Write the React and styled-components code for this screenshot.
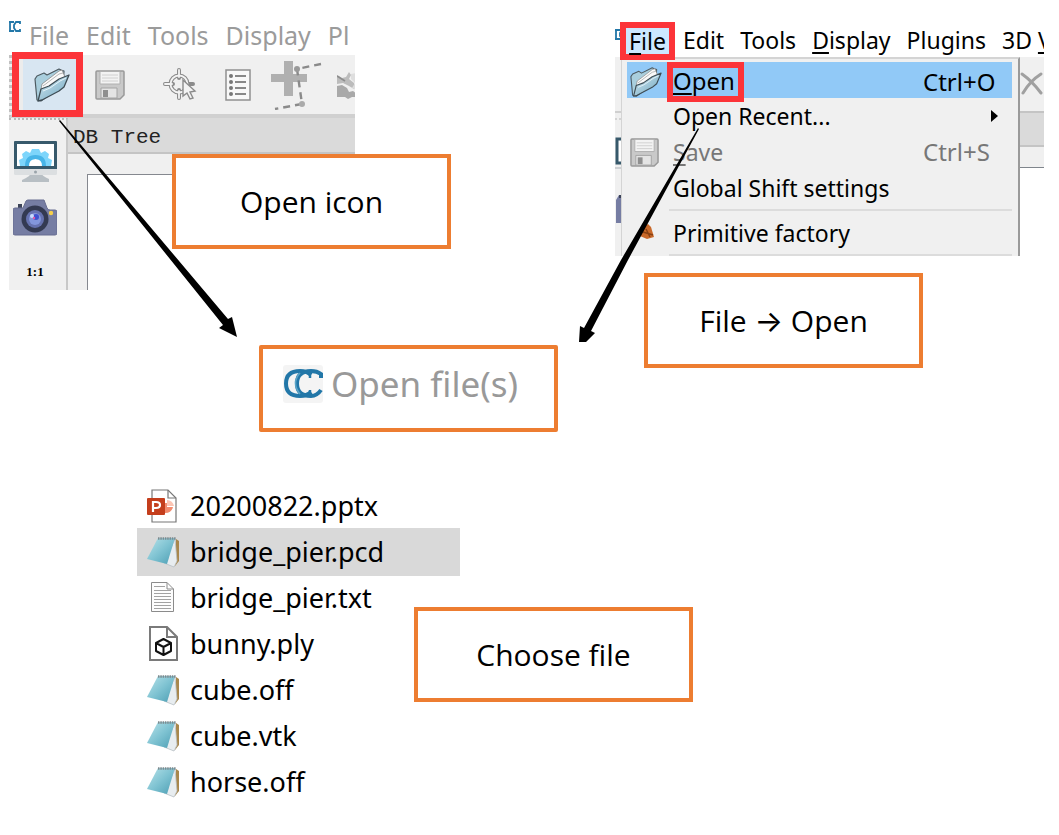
import React from "react";
import styled, { createGlobalStyle, css } from "styled-components";

const Global = createGlobalStyle`
  *, *::before, *::after { box-sizing: border-box; }
  body { margin: 0; background: #fff; color: #000; font-family: "Noto Sans", "Open Sans", sans-serif; }
  button { font: inherit; color: inherit; border: 0; background: none; padding: 0; margin: 0; }
  ul { list-style: none; margin: 0; padding: 0; }
  svg { display: block; flex: none; }
  u { text-underline-offset: 3px; text-decoration-thickness: 2px; }
`;

const Page = styled.main`
  display: flex;
  flex-direction: column;
  gap: 51px;
  padding: 17px 15px 28px 9px;
`;

const Steps = styled.div`
  display: grid;
  grid-template-columns: 1fr auto;
  column-gap: 56px;
`;

const Step = styled.section`
  position: relative;
  display: flex;
  flex-direction: column;
  align-items: flex-start;
  gap: ${(p) => p.$gap}px;
`;

const Arrow = styled.svg`
  position: absolute;
  left: ${(p) => p.$x}px;
  top: ${(p) => p.$y}px;
  z-index: 2;
  pointer-events: none;
`;

const Callout = styled.div`
  display: flex;
  align-items: center;
  justify-content: center;
  width: 279px;
  height: 95px;
  padding-top: 1px;
  border: 4px solid #ed7d31;
  background: #fff;
  font-family: "Open Sans", sans-serif;
  font-size: 30px;
  line-height: 40px;
  white-space: pre;
  ${(p) =>
    p.$over &&
    css`
      position: absolute;
      z-index: 1;
      left: ${p.$over[0]}px;
      top: ${p.$over[1]}px;
    `}
`;

const ArrowGlyph = styled.span`
  font-family: "Inter", sans-serif;
`;

const RightCallout = styled.div`
  padding-left: 29px;
`;

/* Main window with toolbar */

const Shot = styled.div`
  width: 346px;
  height: 273px;
  display: flex;
  flex-direction: column;
  overflow: hidden;
`;

const MenuBar = styled.nav`
  display: flex;
  height: 38px;
  gap: 17px;
  color: #9b9b9b;
  white-space: nowrap;
  font-size: 25px;
  line-height: 36px;
`;

const WindowLogo = styled.span`
  width: 3px;
`;

const MenuBarItem = styled.button`
  flex: none;
  height: 36px;
`;

const Toolbar = styled.div`
  display: flex;
  align-items: center;
  height: 63px;
  background: #f0f0f0;
  border-bottom: 4px solid #d0d0d0;
  border-left: 3px dotted #c0c0c0;
`;

const ToolButton = styled.button`
  display: flex;
  align-items: center;
  justify-content: center;
  flex: none;
  width: ${(p) => p.$w}px;
  height: 56px;
`;

const MarkedTool = styled(ToolButton)`
  height: 65px;
  padding-left: 8px;
  border: 7px solid #fc3439;
  background: #d8e6f2;
  box-shadow: inset 4px 0 #ececec;
  position: relative;
  z-index: 1;
`;

const ToolSeparator = styled.span`
  width: 2px;
  height: 49px;
  margin-left: 8px;
  background: #dcdcdc;
`;

const Body = styled.div`
  display: flex;
  flex: 1;
`;

const SideBar = styled.div`
  width: 59px;
  display: flex;
  flex-direction: column;
  align-items: center;
  padding: 20px 5px 0 0;
  gap: 16px;
  background: #f0f0f0;
  border-top: 2px dotted #b8b8b8;
  border-right: 2px solid #c8c8c8;
`;

const Ratio = styled.button`
  font-family: "Liberation Serif", serif;
  font-weight: 700;
  font-size: 13px;
  line-height: 16px;
  padding-top: 12px;
`;

const Dock = styled.div`
  flex: 1;
  display: flex;
  flex-direction: column;
  background: #f0f0f0;
`;

const DockTitle = styled.div`
  height: 36px;
  padding-left: 5px;
  background: #dadada;
  border-bottom: 2px solid #c4c4c4;
  color: #222;
  font-family: "Liberation Mono", monospace;
  font-size: 21px;
  line-height: 40px;
`;

const TreeView = styled.div`
  flex: 1;
  margin: 20px 0 0 19px;
  background: #fff;
  border: 1px solid #85888f;
  border-width: 1px 0 0 1px;
`;

/* Dialog title */

const DialogTitle = styled.div`
  display: flex;
  align-items: center;
  gap: 8px;
  width: 299px;
  height: 87px;
  margin-left: 250px;
  padding: 0 0 10px 20px;
  border: 4px solid #ed7d31;
  border-radius: 2px;
  color: #999;
  font-size: 35px;
  line-height: 44px;
  white-space: nowrap;
`;

/* Window with the open File menu */

const MenuShot = styled.div`
  width: 429px;
  height: 234px;
  overflow: hidden;
  margin-top: 5px;
`;

const TopMenu = styled(MenuBar)`
  height: 35px;
  gap: 16px;
  color: #000;
  font-size: 23px;
`;

const CutLogo = styled.span`
  flex: none;
  width: 5px;
  margin-right: -16px;
  padding-top: 3px;
  overflow: hidden;
`;

const MarkedItem = styled(MenuBarItem)`
  width: 55px;
  height: 38px;
  margin-right: -8px;
  line-height: 24px;
  border: 6px solid #fc3439;
  background: #cce8ff;
  position: relative;
  z-index: 2;
`;

const Backdrop = styled.div`
  height: 199px;
  display: grid;
  grid-template-columns: 6px 1fr 24px;
`;

const Strip = styled.div`
  display: flex;
  flex-direction: column;
  overflow: hidden;
  background: #f0f0f0;
  padding-top: ${(p) => p.$pad}px;
`;

const StripTitle = styled.div`
  height: 36px;
  margin-top: 14px;
  background: #dadada;
  border: 2px solid #c4c4c4;
  border-width: 2px 0;
`;

const StripView = styled.div`
  flex: 1;
  margin-top: 20px;
  border-top: 1px solid #7f858c;
  background: #fff;
`;

const Menu = styled.ul`
  background: #f0f0f0;
  border: 2px solid #d4d4d4;
  border-width: 2px 2px 0 1px;
  border-right-color: #9a9a9a;
  padding: 3px 6px 0 5px;
`;

const MenuAction = styled.button`
  display: grid;
  grid-template-columns: 46px 1fr auto;
  align-items: center;
  width: 100%;
  height: 36px;
  padding: 0 14px 0 0;
  text-align: left;
  font-size: 23px;
  line-height: 36px;
  white-space: nowrap;
  color: ${(p) => (p.disabled ? "#777" : "#000")};
  background: ${(p) => (p.$active ? "#91c9f7" : "transparent")};
`;

const MenuIcon = styled.span`
  display: flex;
  padding-left: 3px;
`;

const Shortcut = styled.span`
  width: 75px;
  font-size: 24px;
`;

const Divider = styled.li`
  height: 2px;
  margin: 3px 0 4px 42px;
  background: #dcdcdc;
`;

const Marked = styled.span`
  display: block;
  width: 77px;
  height: 40px;
  margin-left: -6px;
  border: 6px solid #fc3439;
  font-size: 24px;
  line-height: 26px;
`;

/* File list */

const Files = styled.section`
  position: relative;
  width: 321px;
  margin-left: 129px;
`;

const FileItem = styled.li`
  display: flex;
  align-items: center;
  gap: 10px;
  height: 46px;
  padding-left: 8px;
  font-size: 27px;
  line-height: 46px;
  white-space: nowrap;
  background: ${(p) => (p.$selected ? "#d9d9d9" : "transparent")};
  box-shadow: ${(p) => (p.$selected ? "0 0 0 1px #d9d9d9" : "none")};
`;

const FolderIcon = ({ w = 36 }) => (
  <svg width={w} height={w} viewBox="0 0 36 36">
    <defs>
      <linearGradient id="folder" x1="0" y1="0" x2="1" y2="1">
        <stop offset="0" stopColor="#d3e9f3" />
        <stop offset="1" stopColor="#6fa6bf" />
      </linearGradient>
    </defs>
    <path d="M3 33 L1 12 L3 9 L10 6 L13 8 L25 2 L27 3 L30 4 L29 18 L7 34 Z" fill="#a9cedd" stroke="#4d5a61" strokeWidth="1.2" strokeLinejoin="round" />
    <path d="M6 28 L8 17 L25 4 L28 3 L31 10 L12 27 Z" fill="#fafafa" stroke="#888" strokeWidth="0.8" />
    <path d="M9 19 L25 7 L29 6" stroke="#b5b5b5" fill="none" />
    <path d="M4 34 L7 22 L15 19 L25 12 L35 8 L30 20 L25 24 L8 33 Z" fill="url(#folder)" stroke="#3e4c54" strokeWidth="1.3" strokeLinejoin="round" />
    <path d="M9 24 L16 21 L26 14 L32 11" stroke="#e8f5fa" fill="none" />
  </svg>
);

const FloppyIcon = ({ w = 30 }) => (
  <svg width={w} height={w} viewBox="0 0 30 30">
    <path d="M1 2 Q1 1 2 1 H28 Q29 1 29 2 V25 L25 29 H2 Q1 29 1 28 Z" fill="#c9c9c9" stroke="#999" strokeWidth="1.5" />
    <path d="M5 1.5 H25 V14 H5 Z" fill="#f3f3f3" stroke="#b0b0b0" />
    <path d="M7 5 H23 M7 8 H23 M7 11 H23" stroke="#d0d0d0" />
    <path d="M6 18 H22 V28 H6 Z" fill="#e4e4e4" stroke="#a4a4a4" />
    <path d="M8 20 H13 V27 H8 Z" fill="#8f8f8f" />
  </svg>
);

const TargetIcon = () => (
  <svg width="34" height="34" viewBox="0 0 34 34" fill="none">
    <circle cx="16" cy="16" r="8.5" stroke="#8b8b8b" strokeWidth="4" />
    <path d="M16 2 V10 M16 22 V30 M2 16 H10 M22 16 H30" stroke="#8b8b8b" strokeWidth="4" strokeLinecap="round" />
    <circle cx="16" cy="16" r="8.5" stroke="#f3f3f3" strokeWidth="1.8" />
    <path d="M16 2 V9 M16 23 V30 M2 16 H9" stroke="#f3f3f3" strokeWidth="1.8" strokeLinecap="round" />
    <path d="M20 12 V28 L24 25 L27 31 L30 30 L27 24 L32 23 Z" fill="#f3f3f3" stroke="#8b8b8b" strokeWidth="1.4" />
  </svg>
);

const ListIcon = () => (
  <svg width="26" height="32" viewBox="0 0 26 32">
    <path d="M1 1 H25 V31 H1 Z" fill="#f8f8f8" stroke="#909090" strokeWidth="1.5" />
    {[7, 13, 19, 25].map((y) => (
      <g key={y}>
        <circle cx="6" cy={y} r="2" fill="#777" />
        <path d={`M10 ${y} H21`} stroke="#888" strokeWidth="2" />
      </g>
    ))}
  </svg>
);

const PolylineIcon = () => (
  <svg width="52" height="50" viewBox="0 0 52 50">
    <path d="M1 14 H14 V1 H23 V14 H37 V22 H23 V36 H14 V22 H1 Z" fill="#b0b0b0" />
    <path d="M51 4 L27 9 L32 44 L5 49" fill="none" stroke="#8a8a8a" strokeWidth="2.4" strokeDasharray="7 5" />
    <circle cx="27" cy="9" r="3" fill="#999" />
    <circle cx="32" cy="44" r="3" fill="#aaa" />
  </svg>
);

const SegmentIcon = () => (
  <svg width="20" height="28" viewBox="0 0 20 28">
    <path d="M0 4 L5 7 L9 6 L12 1 L14 4 L12 8 L17 12 V18 L12 15 L6 12 L0 13 Z" fill="#bcbcbc" />
    <path d="M0 15 L5 14 L10 17 L12 21 L16 20 L20 23 V26 H15 L11 28 L8 26 H0 Z" fill="#a9a9a9" />
    <path d="M14 3 L20 2 V19 L15 17 L18 12 L14 8 Z" fill="#dedede" />
    <path d="M0 5 L8 10" stroke="#8d8d8d" strokeWidth="1.6" />
  </svg>
);

const MonitorIcon = () => (
  <svg width="43" height="43" viewBox="0 0 43 43">
    <path d="M12 38 Q16 36 17 33 H27 Q28 36 35 39 V42 H8 V40 Z" fill="#b8bfc4" />
    <rect x="0" y="1" width="43" height="34" rx="1.5" fill="#dcdfe1" />
    <path d="M0 2 Q0 1 1 1 H42 Q43 1 43 2 V29 H0 Z" fill="#37596b" />
    <rect x="3" y="4" width="37" height="22" fill="#fff" />
    <path d="M6 26 L5 20 L9 18 L8 14 L12 11 L16 13 L18 9 H25 L27 13 L31 11 L35 14 L34 18 L38 20 L37 26 H29 Q28 19 21.500 19 Q15 19 14 26 Z" fill="#7dd5fb" />
    <path d="M11 26 Q11 15 21.500 15 Q32 15 32 26 H28 Q28 19 21.500 19 Q15 19 15 26 Z" fill="#48b5e8" />
    <circle cx="21.500" cy="32" r="1.500" fill="#9aa4aa" />
  </svg>
);

const CameraIcon = () => (
  <svg width="44" height="37" viewBox="0 0 44 37">
    <path d="M5 9 V5 H9 V9" fill="#3c4358" />
    <path d="M2 9 H10 L13 2 Q14 1 15 1 H31 L34 9 Q35 11 37 11 H42 Q44 11 44 13 V34 Q44 36 42 36 H2 Q0 36 0 34 V11 Q0 9 2 9 Z" fill="#767da3" stroke="#666c90" />
    <circle cx="22" cy="20" r="13.500" fill="#343a52" />
    <circle cx="22" cy="20" r="9" fill="#6672b0" />
    <circle cx="22" cy="20" r="6" fill="#8396dc" />
    <circle cx="23" cy="18" r="3" fill="#3f52cf" />
    <circle cx="19" cy="17" r="2" fill="#c9dcff" />
    <circle cx="21" cy="19" r="1.200" fill="#e45aa8" />
    <circle cx="38" cy="14" r="2.200" fill="#f6cf4a" />
  </svg>
);

const SideEdge = () => (
  <svg width="6" height="199" viewBox="0 0 6 199">
    <path d="M0 55 H6" stroke="#d0d0d0" strokeWidth="2" />
    <path d="M0 62 H6" stroke="#b8b8b8" strokeDasharray="2 2" />
    <path d="M1 82 H6 V106 H1 Z" fill="#fff" />
    <path d="M6 82 H2 V106 H6" fill="none" stroke="#37596b" strokeWidth="3" />
    <path d="M0 111 H6" stroke="#cdd0d3" strokeWidth="2" />
    <path d="M1 143 L4 138 H6 V166 H1 Z" fill="#767da3" />
    <path d="M4 138 H6 V141 H4 Z" fill="#3c4358" />
  </svg>
);

const CCLogo = () => (
  <svg width="40" height="38" viewBox="0 0 40 38">
    <rect width="40" height="38" rx="3" fill="#f4f4f4" />
    <path d="M28 10 Q24 6 17 6 Q3 6 3 18.500 Q3 31 17 31 Q24 31 28 27" fill="none" stroke="#2277a8" strokeWidth="4" />
    <path d="M38 13 V9 Q34 6 28 6 Q14 6 14 18.500 Q14 31 28 31 Q34 31 38 25" fill="none" stroke="#2277a8" strokeWidth="4" />
    <path d="M27 8 V13 M27 25 V29" stroke="#2277a8" strokeWidth="2.500" />
    <path d="M17 8 Q8 18 17 29" fill="none" stroke="#5aa3c6" strokeWidth="1.600" />
  </svg>
);

const SmallLogo = () => (
  <svg width="12" height="20" viewBox="0 0 12 20">
    <path d="M0 5 H5 M0 14 H5 M1 5 V14 M11 7 V5 H7 L5 8 V11 L7 14 H11 V12" fill="none" stroke="#2277a8" strokeWidth="1.800" />
  </svg>
);

const PptIcon = () => (
  <svg width="34" height="34" viewBox="0 0 34 34">
    <path d="M6 1 H22 L30 9 V33 H6 Z" fill="#fff" stroke="#777" strokeWidth="1.200" />
    <path d="M22 1 V9 H30" fill="none" stroke="#777" strokeWidth="1.200" />
    <path d="M19 14 V24 A8 8 0 0 0 27 18 H21 V14 Z" fill="#f28b6e" />
    <path d="M21 11 A7 7 0 0 1 28 17 H21 Z" fill="#fbc4b3" />
    <rect x="1" y="9" width="18" height="17" rx="1" fill="#c43e1c" />
    <path d="M7 23 V13 H10 Q14 13 14 16 Q14 19 10 19 H7" fill="none" stroke="#fff" strokeWidth="2.200" />
  </svg>
);

const NotepadIcon = () => (
  <svg width="34" height="34" viewBox="0 0 34 34">
    <defs>
      <linearGradient id="pad" x1="0" y1="0" x2="1" y2="1">
        <stop offset="0" stopColor="#b9e3ea" />
        <stop offset="0.500" stopColor="#7fc3d2" />
        <stop offset="1" stopColor="#4b9db3" />
      </linearGradient>
    </defs>
    <path d="M30 4 L33 6 V26 L29 31 Z" fill="#a8874c" />
    <path d="M29 4 L31 26 L28 32 L18 28 Z" fill="#e8edf0" stroke="#b7bfc4" strokeWidth="0.800" />
    <path d="M12 3 H29 L21 29 L1 24 Z" fill="url(#pad)" />
    <path d="M12 3.500 H30" stroke="#7d8a8f" strokeWidth="2.600" strokeDasharray="1.500 0.800" />
  </svg>
);

const TextIcon = () => (
  <svg width="34" height="34" viewBox="0 0 34 34">
    <path d="M5.500 1.500 H21 L27.500 8 V30.500 H5.500 Z" fill="#fdfdfd" stroke="#8b8b8b" />
    <path d="M21 1.500 V8 H27.500" fill="none" stroke="#8b8b8b" />
    <path d="M8 5.500 H19 M8 9.500 H25 M8 12.500 H25 M8 15.500 H25 M8 18.500 H25 M8 21.500 H25 M8 24.500 H25 M8 27.500 H25" stroke="#a2a2a2" />
  </svg>
);

const PlyIcon = () => (
  <svg width="34" height="36" viewBox="0 0 34 36">
    <path d="M4 1 H21 L31 11 V34 H4 Z" fill="#fff" stroke="#7a7a7a" strokeWidth="2" />
    <path d="M21 1 V11 H31" fill="none" stroke="#7a7a7a" strokeWidth="2" />
    <path d="M17.500 13 L25 17 V25 L17.500 29 L10 25 V17 Z M10 17 L17.500 21 L25 17 M17.500 21 V29" fill="none" stroke="#111" strokeWidth="2" strokeLinejoin="round" />
  </svg>
);

const ShapesIcon = () => (
  <svg width="26" height="22" viewBox="0 0 26 22">
    <path d="M14 4 L18 2 L21 5 L24 15 L17 17 L10 14 Z" fill="#c9692a" />
    <path d="M16 7 L20 15 M13 10 L23 13" stroke="#8a4214" strokeWidth="1.500" />
  </svg>
);

const files = [
  ["20200822.pptx", PptIcon],
  ["bridge_pier.pcd", NotepadIcon],
  ["bridge_pier.txt", TextIcon],
  ["bunny.ply", PlyIcon],
  ["cube.off", NotepadIcon],
  ["cube.vtk", NotepadIcon],
  ["horse.off", NotepadIcon],
];

export default function App() {
  return (
    <Page>
      <Global />
      <Steps>
        <Step $gap={55}>
          <Shot>
            <MenuBar>
              <WindowLogo><SmallLogo /></WindowLogo>
              {["File", "Edit", "Tools", "Display", "Pl"].map((t) => (
                <MenuBarItem key={t}>{t}</MenuBarItem>
              ))}
            </MenuBar>
            <Toolbar>
              <MarkedTool $w={71} aria-label="Open"><FolderIcon /></MarkedTool>
              <ToolButton $w={54} aria-label="Save"><FloppyIcon /></ToolButton>
              <ToolSeparator />
              <ToolButton $w={70} aria-label="Pick center"><TargetIcon /></ToolButton>
              <ToolButton $w={46} aria-label="Properties"><ListIcon /></ToolButton>
              <ToolButton $w={70} aria-label="Trace polyline"><PolylineIcon /></ToolButton>
              <ToolButton $w={32} aria-label="Segment"><SegmentIcon /></ToolButton>
            </Toolbar>
            <Body>
              <SideBar>
                <MonitorIcon />
                <CameraIcon />
                <Ratio>1:1</Ratio>
              </SideBar>
              <Dock>
                <DockTitle>DB Tree</DockTitle>
                <TreeView />
              </Dock>
            </Body>
          </Shot>
          <Callout $over={[163, 137]}>Open icon</Callout>
          <Arrow $x={49} $y={103} width="182" height="218" viewBox="0 0 182 218">
            <path d="M1 1 L2 0 L170 199 L174 197 L179 217 L161 208 L165 205 Z" />
          </Arrow>
          <DialogTitle>
            <CCLogo />
            Open file(s)
          </DialogTitle>
        </Step>
        <Step $gap={17}>
          <MenuShot>
            <TopMenu>
              <CutLogo><SmallLogo /></CutLogo>
              <MarkedItem><u>F</u>ile</MarkedItem>
              <MenuBarItem>Edit</MenuBarItem>
              <MenuBarItem>Tools</MenuBarItem>
              <MenuBarItem><u>D</u>isplay</MenuBarItem>
              <MenuBarItem>Plugins</MenuBarItem>
              <MenuBarItem>3D <u>V</u></MenuBarItem>
            </TopMenu>
            <Backdrop>
              <Strip><SideEdge /></Strip>
              <Menu>
                <li>
                  <MenuAction $active>
                    <MenuIcon><FolderIcon w={32} /></MenuIcon>
                    <Marked><u>O</u>pen</Marked>
                    <Shortcut>Ctrl+O</Shortcut>
                  </MenuAction>
                </li>
                <li>
                  <MenuAction>
                    <MenuIcon />
                    <span>Open Recent...</span>
                    <svg width="7" height="12" viewBox="0 0 7 12"><path d="M0 0 L7 6 L0 12 Z" /></svg>
                  </MenuAction>
                </li>
                <li>
                  <MenuAction disabled>
                    <MenuIcon><FloppyIcon w={29} /></MenuIcon>
                    <span><u>S</u>ave</span>
                    <Shortcut>Ctrl+S</Shortcut>
                  </MenuAction>
                </li>
                <li>
                  <MenuAction>
                    <MenuIcon />
                    <span>Global Shift settings</span>
                  </MenuAction>
                </li>
                <Divider />
                <li>
                  <MenuAction>
                    <MenuIcon><ShapesIcon /></MenuIcon>
                    <span>Primitive factory</span>
                  </MenuAction>
                </li>
                <Divider />
              </Menu>
              <Strip $pad={12}>
                <svg width="24" height="28" viewBox="0 0 24 28"><path d="M2 5 Q12 12 21 24 M21 5 Q10 12 3 24" fill="none" stroke="#a0a0a0" strokeWidth="3" strokeLinecap="round" /></svg>
                <StripTitle />
                <StripView />
              </Strip>
            </Backdrop>
          </MenuShot>
          <RightCallout>
            <Callout>File <ArrowGlyph>→</ArrowGlyph> Open</Callout>
          </RightCallout>
          <Arrow $x={-37} $y={111} width="122" height="216" viewBox="0 0 122 216">
            <path d="M120 0 L121 1 L50 132 L13 203 L17 205 L8 214 H1 L2 198 L6 200 L43 132 Z" />
          </Arrow>
        </Step>
      </Steps>
      <Files>
        <ul>
          {files.map(([name, Icon]) => (
            <FileItem key={name} $selected={name === "bridge_pier.pcd"}>
              <Icon />
              {name}
            </FileItem>
          ))}
        </ul>
        <Callout $over={[276, 124]}>Choose file</Callout>
      </Files>
    </Page>
  );
}
